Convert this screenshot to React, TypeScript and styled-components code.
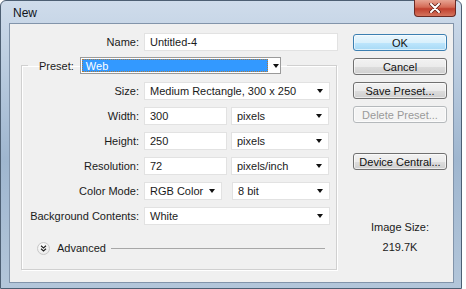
import * as React from 'react'
import styled, { createGlobalStyle } from 'styled-components'

const GlobalStyle = createGlobalStyle`
  html, body {
    margin: 0;
    padding: 0;
    background: #fff;
  }
  * {
    box-sizing: border-box;
  }
`

const StyledWindow = styled.div`
  width: 462px;
  height: 289px;
  display: flex;
  flex-direction: column;
  padding: 0 7px 5px 8px;
  border: 1px solid #4d5f73;
  border-radius: 6px 6px 0 0;
  background: linear-gradient(180deg, #cfdceb 0%, #b4c7dc 30%, #9fb6cf 55%, #b3c6da 100%);
  font-family: 'Liberation Sans', Arial, sans-serif;
  font-size: 11px;
  color: #1a1a1a;
`

const StyledTitleBar = styled.header`
  height: 22px;
  display: flex;
  align-items: flex-start;
  justify-content: space-between;

  > span {
    font-family: 'Liberation Sans', Arial, sans-serif;
    font-size: 12px;
    color: #10141a;
    padding: 5px 0 0 4px;
  }
`

const StyledCloseButton = styled.button`
  width: 42px;
  height: 17px;
  margin: -1px -2px 0 0;
  border: 1px solid #6b2a24;
  border-top: none;
  border-radius: 0 0 4px 4px;
  background: linear-gradient(180deg, #e7a493 0%, #d46a55 45%, #c0402e 55%, #d5745d 100%);
  display: flex;
  align-items: center;
  justify-content: center;
  padding: 0;
`

const StyledClient = styled.main`
  flex: 1;
  display: flex;
  gap: 15px;
  padding: 9px 0 0 11px;
  background: #f0f0f0;
  border: 1px solid #8294aa;
`

const StyledLeftColumn = styled.div`
  width: 317px;
  display: flex;
  flex-direction: column;
`

const StyledRow = styled.div`
  display: flex;
  align-items: center;
  gap: 4px;
  height: 18px;
`

const StyledLabel = styled.label`
  width: ${(props: { width: number }) => props.width}px;
  text-align: right;
  white-space: nowrap;
  padding-right: 1px;
`

const StyledInput = styled.div`
  width: ${(props: { width: number }) => props.width}px;
  height: 18px;
  background: #fff;
  border: 1px solid #e2e2e2;
  padding: 0 5px;
  display: flex;
  align-items: center;
  white-space: nowrap;
  overflow: hidden;
`

const StyledSelect = styled(StyledInput)`
  justify-content: space-between;
  padding-right: 6px;
`

const StyledArrow = styled.span`
  width: 0;
  height: 0;
  border-left: 3.5px solid transparent;
  border-right: 3.5px solid transparent;
  border-top: 4px solid #111;
  flex-shrink: 0;
`

const StyledGroup = styled.fieldset`
  margin: 6px 0 0 0;
  width: 316px;
  height: 213px;
  padding: 0;
  border: 1px solid #d0d0d0;
  box-shadow: inset 1px 1px 0 #fff, 1px 1px 0 #fff;

  > legend {
    margin-left: 6px;
    padding: 0 6px 0 11px;
    display: flex;
    align-items: center;
    gap: 6px;
    height: 17px;
  }
`

const StyledPresetSelect = styled.div`
  width: 201px;
  height: 17px;
  background: #fff;
  border: 1px solid #9a9a9a;
  display: flex;
  align-items: center;
  padding: 1px;
  gap: 5px;

  > span:first-child {
    flex: 1;
    height: 100%;
    background: #3399ff;
    color: #fff;
    outline: 1px dotted #b07a3a;
    outline-offset: -1px;
    padding: 0 4px;
    display: flex;
    align-items: center;
  }
`

const StyledGroupBody = styled.div`
  display: flex;
  flex-direction: column;
  gap: 7px;
  padding-top: 8px;
`

const StyledAdvanced = styled.div`
  display: flex;
  align-items: center;
  gap: 7px;
  margin: 16px 0 0 15px;
  height: 14px;

  > hr {
    width: 214px;
    margin: 0 0 0 -2px;
    border: none;
    border-top: 1px solid #a7a7a7;
  }
`

const StyledRoundButton = styled.span`
  width: 13px;
  height: 13px;
  border-radius: 50%;
  border: 1px solid #c8c8c8;
  background: radial-gradient(circle at 40% 35%, #ffffff, #e4e4e4);
  display: flex;
  align-items: center;
  justify-content: center;
`

const StyledRightColumn = styled.div`
  width: 94px;
  display: flex;
  flex-direction: column;
  gap: 7px;
  padding-top: 1px;
`

type ButtonKind = { kind?: 'default' | 'disabled' }

const StyledButton = styled.button<ButtonKind>`
  width: 94px;
  height: 17px;
  padding: 0;
  font-family: inherit;
  font-size: 11px;
  border-radius: 3px;
  color: ${(props) => (props.kind === 'disabled' ? '#9a9a9a' : '#111')};
  border: 1px solid
    ${(props) =>
      props.kind === 'default' ? '#3c7fb1' : props.kind === 'disabled' ? '#b5b9bc' : '#707070'};
  background: ${(props) =>
    props.kind === 'default'
      ? 'linear-gradient(180deg, #eaf6fd 0%, #d9f0fc 50%, #bee6fd 51%, #a7d9f5 100%)'
      : props.kind === 'disabled'
      ? '#f4f4f4'
      : 'linear-gradient(180deg, #f2f2f2 0%, #ebebeb 50%, #dddddd 51%, #cfcfcf 100%)'};
  box-shadow: inset 0 0 0 1px rgba(255, 255, 255, 0.6);
`

const StyledSpacer = styled.div`
  height: 16px;
`

const StyledColourSpacer = styled.span`
  width: 2px;
`

const StyledImageSize = styled.div`
  margin-top: 44px;
  text-align: center;
  display: flex;
  flex-direction: column;
  gap: 8px;
  line-height: 12px;
`

const CloseIcon = () => (
  <svg width="12" height="10" viewBox="0 0 12 10">
    <path d="M2 1 L10 9 M10 1 L2 9" stroke="#5a1a14" strokeWidth="3.4" strokeLinecap="round" />
    <path d="M2 1 L10 9 M10 1 L2 9" stroke="#fff" strokeWidth="2" strokeLinecap="round" />
  </svg>
)

const ChevronsIcon = () => (
  <svg width="7" height="7" viewBox="0 0 7 7">
    <path d="M1 0.8 L3.5 3 L6 0.8 M1 3.8 L3.5 6 L6 3.8" stroke="#222" strokeWidth="1.2" fill="none" />
  </svg>
)

const Select = ({ width, value }: { width: number; value: string }) => (
  <StyledSelect width={width}>
    <span>{value}</span>
    <StyledArrow />
  </StyledSelect>
)

const LABEL_WIDTH = 118

export default () => (
  <>
    <GlobalStyle />
    <StyledWindow>
      <StyledTitleBar>
        <span>New</span>
        <StyledCloseButton>
          <CloseIcon />
        </StyledCloseButton>
      </StyledTitleBar>
      <StyledClient>
        <StyledLeftColumn>
          <StyledRow>
            <StyledLabel width={119}>Name:</StyledLabel>
            <StyledInput width={194}>Untitled-4</StyledInput>
          </StyledRow>
          <StyledGroup>
            <legend>
              <span>Preset:</span>
              <StyledPresetSelect>
                <span>Web</span>
                <StyledArrow />
              </StyledPresetSelect>
            </legend>
            <StyledGroupBody>
              <StyledRow>
                <StyledLabel width={LABEL_WIDTH}>Size:</StyledLabel>
                <Select width={186} value="Medium Rectangle, 300 x 250" />
              </StyledRow>
              <StyledRow>
                <StyledLabel width={LABEL_WIDTH}>Width:</StyledLabel>
                <StyledInput width={83}>300</StyledInput>
                <Select width={98} value="pixels" />
              </StyledRow>
              <StyledRow>
                <StyledLabel width={LABEL_WIDTH}>Height:</StyledLabel>
                <StyledInput width={83}>250</StyledInput>
                <Select width={98} value="pixels" />
              </StyledRow>
              <StyledRow>
                <StyledLabel width={LABEL_WIDTH}>Resolution:</StyledLabel>
                <StyledInput width={83}>72</StyledInput>
                <Select width={98} value="pixels/inch" />
              </StyledRow>
              <StyledRow>
                <StyledLabel width={LABEL_WIDTH}>Color Mode:</StyledLabel>
                <Select width={78} value="RGB Color" />
                <StyledColourSpacer />
                <Select width={98} value="8 bit" />
              </StyledRow>
              <StyledRow>
                <StyledLabel width={LABEL_WIDTH}>Background Contents:</StyledLabel>
                <Select width={186} value="White" />
              </StyledRow>
            </StyledGroupBody>
            <StyledAdvanced>
              <StyledRoundButton>
                <ChevronsIcon />
              </StyledRoundButton>
              <span>Advanced</span>
              <hr />
            </StyledAdvanced>
          </StyledGroup>
        </StyledLeftColumn>
        <StyledRightColumn>
          <StyledButton kind="default">OK</StyledButton>
          <StyledButton>Cancel</StyledButton>
          <StyledButton>Save Preset...</StyledButton>
          <StyledButton kind="disabled">Delete Preset...</StyledButton>
          <StyledSpacer />
          <StyledButton>Device Central...</StyledButton>
          <StyledImageSize>
            <span>Image Size:</span>
            <span>219.7K</span>
          </StyledImageSize>
        </StyledRightColumn>
      </StyledClient>
    </StyledWindow>
  </>
)
